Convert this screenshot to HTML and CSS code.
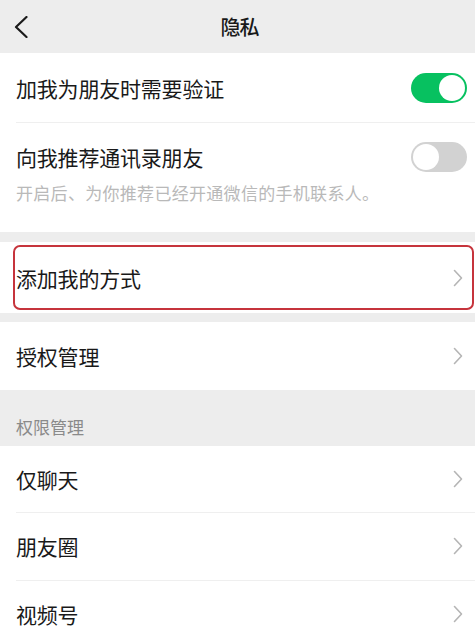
FILE: index.html
```html
<!DOCTYPE html>
<html lang="zh-CN">
<head>
    <meta charset="UTF-8">
    <meta name="viewport" content="width=device-width, initial-scale=1.0">
    <title>隐私</title>
    <link rel="stylesheet" href="styles.css">
</head>
<body>
    <div class="nav">
        <div class="nav-back">
            <svg width="14" height="22" viewBox="0 0 14 22"><polyline points="12.5,1 2,11 12.5,21" fill="none" stroke="#1a1a1a" stroke-width="2.2" stroke-linejoin="round" stroke-linecap="round"/></svg>
        </div>
        <div class="nav-title">隐私</div>
        <div></div>
    </div>

    <!-- Friend verification -->
    <div class="group">
        <div class="cell cell-first">
            <div class="cell-label">加我为朋友时需要验证</div>
            <div class="switch on"><span class="knob"></span></div>
        </div>
        <div class="cell cell-tall">
            <div class="cell-main">
                <div class="cell-label">向我推荐通讯录朋友</div>
                <div class="switch"><span class="knob"></span></div>
            </div>
            <div class="cell-hint">开启后、为你推荐已经开通微信的手机联系人。</div>
        </div>
    </div>

    <div class="group gap">
        <div class="cell cell-add marked">
            <div class="cell-label">添加我的方式</div>
            <svg class="arrow" width="10" height="18" viewBox="0 0 10 18"><polyline points="1.5,1.5 8.5,9 1.5,16.5" fill="none" stroke="#b5b5b5" stroke-width="1.6" stroke-linejoin="round" stroke-linecap="round"/></svg>
        </div>
    </div>

    <div class="group gap-small">
        <div class="cell">
            <div class="cell-label">授权管理</div>
            <svg class="arrow" width="10" height="18" viewBox="0 0 10 18"><polyline points="1.5,1.5 8.5,9 1.5,16.5" fill="none" stroke="#b5b5b5" stroke-width="1.6" stroke-linejoin="round" stroke-linecap="round"/></svg>
        </div>
    </div>

    <div class="section-title">权限管理</div>
    <div class="group">
        <div class="cell cell-short">
            <div class="cell-label">仅聊天</div>
            <svg class="arrow" width="10" height="18" viewBox="0 0 10 18"><polyline points="1.5,1.5 8.5,9 1.5,16.5" fill="none" stroke="#b5b5b5" stroke-width="1.6" stroke-linejoin="round" stroke-linecap="round"/></svg>
        </div>
        <div class="cell">
            <div class="cell-label">朋友圈</div>
            <svg class="arrow" width="10" height="18" viewBox="0 0 10 18"><polyline points="1.5,1.5 8.5,9 1.5,16.5" fill="none" stroke="#b5b5b5" stroke-width="1.6" stroke-linejoin="round" stroke-linecap="round"/></svg>
        </div>
        <div class="cell">
            <div class="cell-label">视频号</div>
            <svg class="arrow" width="10" height="18" viewBox="0 0 10 18"><polyline points="1.5,1.5 8.5,9 1.5,16.5" fill="none" stroke="#b5b5b5" stroke-width="1.6" stroke-linejoin="round" stroke-linecap="round"/></svg>
        </div>
    </div>
</body>
</html>
```

FILE: styles.css
```css
body {
    margin: 0;
    padding: 0;
    background: #ededed;
    font-family: "Noto Sans CJK SC", "Noto Sans", sans-serif;
    color: #191919;
    overflow: hidden;
}

/* Nav bar */
.nav {
    height: 53px;
    display: grid;
    grid-template-columns: 1fr auto 1fr;
    align-items: center;
    background: #ededed;
}

.nav-back {
    padding-left: 14px;
    display: flex;
    align-items: center;
}

.nav-title {
    font-size: 20px;
    font-weight: 500;
    letter-spacing: -1px;
    margin-left: 4px;
}

/* Groups and cells */
.group {
    background: #fff;
}

.group.gap {
    margin-top: 10px;
}

.group.gap-small {
    margin-top: 9px;
}

.cell {
    height: 68px;
    padding: 0 9px 0 16px;
    display: flex;
    align-items: center;
    justify-content: space-between;
    position: relative;
}

.cell + .cell::before {
    content: "";
    position: absolute;
    top: 0;
    left: 16px;
    right: 0;
    border-top: 1px solid #efefef;
}

.cell-label {
    font-size: 21px;
    letter-spacing: -0.2px;
}

.cell.cell-first {
    height: 69px;
}

.cell.cell-tall {
    height: auto;
    display: block;
    padding-bottom: 27px;
}

.cell-main {
    height: 70px;
    display: flex;
    align-items: center;
    justify-content: space-between;
}

.cell-hint {
    margin-top: -11px;
    font-size: 17px;
    letter-spacing: 0.3px;
    line-height: 24px;
    color: #b9b9b9;
}

.cell.cell-add {
    height: 71px;
}

.cell.cell-short {
    height: 66px;
}

/* Red highlight around the row */
.marked::after {
    content: "";
    position: absolute;
    top: 3px;
    bottom: 3px;
    left: 13px;
    right: 1px;
    border: 2px solid #c6343c;
    border-radius: 7px;
}

.arrow {
    margin-right: 3px;
}

/* Switches */
.switch {
    width: 56px;
    height: 30px;
    border-radius: 15px;
    background: #d2d2d2;
    box-sizing: border-box;
    padding: 2px;
    display: flex;
    justify-content: flex-start;
    margin-right: -1px;
}

.switch.on {
    background: #07c160;
    justify-content: flex-end;
}

.knob {
    width: 26px;
    height: 26px;
    border-radius: 50%;
    background: #fff;
}

/* Section title */
.section-title {
    padding: 26px 16px 8px;
    font-size: 17px;
    line-height: 22px;
    color: #8a8a8a;
}
```
